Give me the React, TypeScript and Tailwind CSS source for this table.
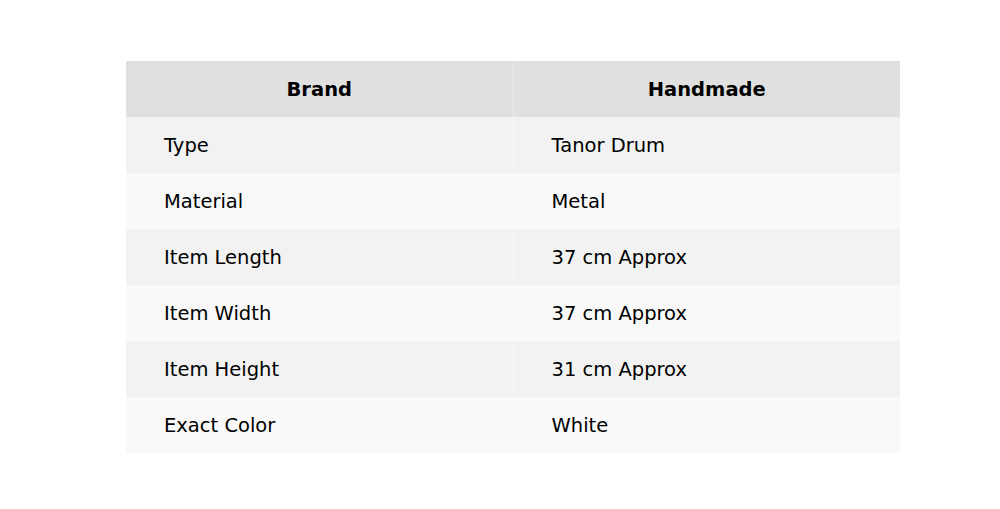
export default function App() {
  const rows: [string, string][] = [
    ["Type", "Tanor Drum"],
    ["Material", "Metal"],
    ["Item Length", "37 cm Approx"],
    ["Item Width", "37 cm Approx"],
    ["Item Height", "31 cm Approx"],
    ["Exact Color", "White"],
  ];
  return (
    <div className="w-[1000px] h-[509px] bg-white pt-[61px] pl-[126px]" style={{ fontFamily: '"DejaVu Sans", sans-serif' }}>
      <table className="w-[774px] border-collapse table-fixed text-black">
        <thead>
          <tr className="bg-[#e0e0e0] h-[56px]">
            <th className="font-bold text-[19.5px] text-center pt-[2px] border-r border-[#ececec]">Brand</th>
            <th className="font-bold text-[19.5px] text-center pt-[2px]">Handmade</th>
          </tr>
        </thead>
        <tbody>
          {rows.map(([a, b], i) => (
            <tr key={a} className={`h-[56px] ${i % 2 === 0 ? "bg-[#f2f2f2]" : "bg-[#f9f9f9]"}`}>
              <td className="pl-[38px] pt-[2px] text-[19.5px] border-r border-[#f7f7f7]">{a}</td>
              <td className="pl-[38px] pt-[2px] text-[19.5px]">{b}</td>
            </tr>
          ))}
        </tbody>
      </table>
    </div>
  );
}
